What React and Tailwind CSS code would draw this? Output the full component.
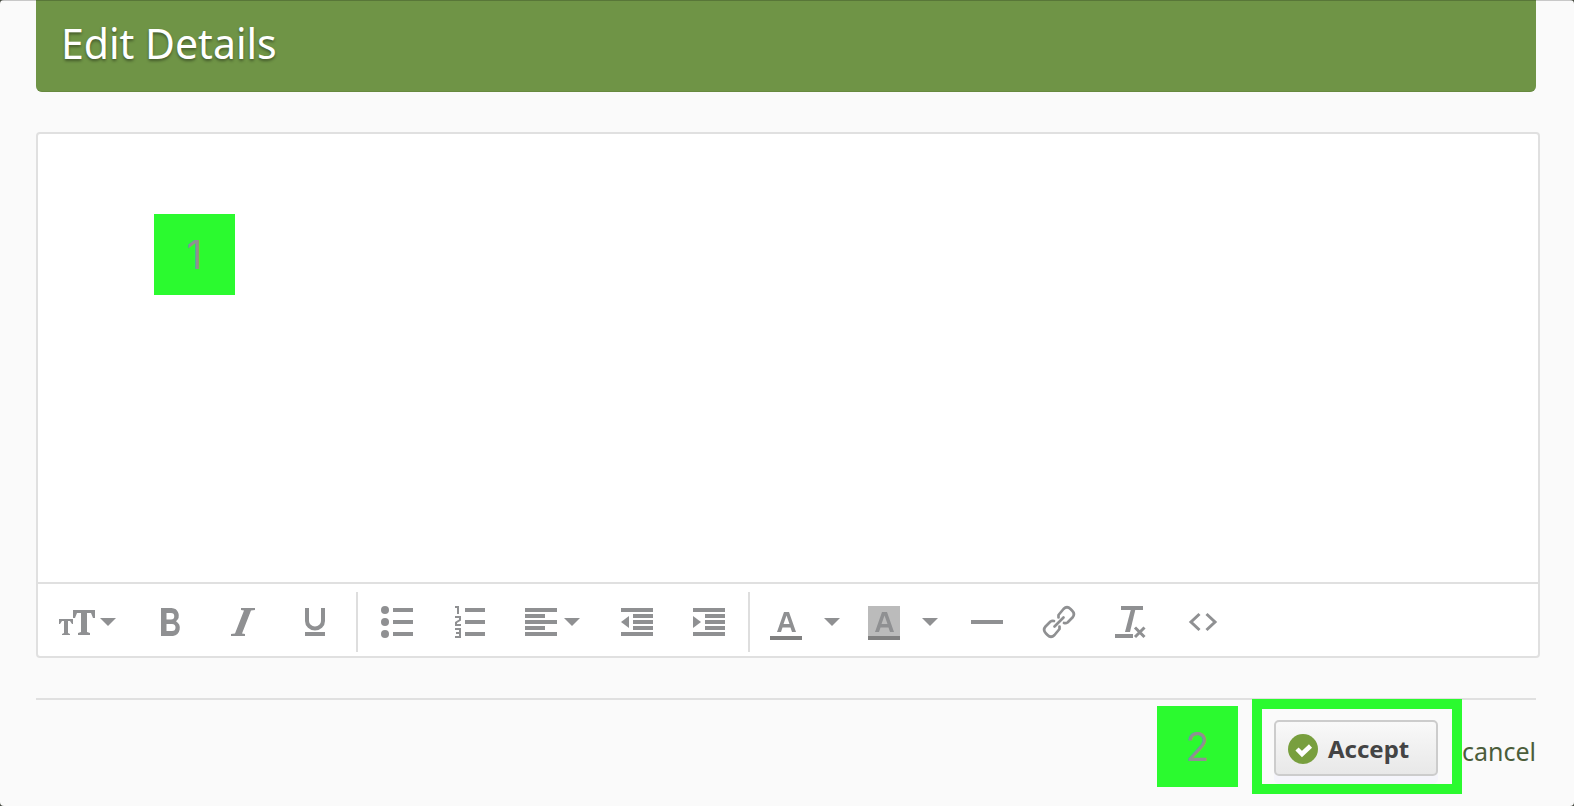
import React, { useState } from 'react';

function Icon({ width = 72, children }) {
  return (
    <svg width={width} height="72" viewBox={`0 0 ${width} 72`} fill="currentColor" aria-hidden="true">
      {children}
    </svg>
  );
}

function ToolButton({ label, width, children }) {
  return (
    <button type="button" aria-label={label} title={label} className="shrink-0 hover:bg-gray-50">
      <Icon width={width}>{children}</Icon>
    </button>
  );
}

function Separator({ className }) {
  return <div className={`mt-2 mb-1 w-[2px] shrink-0 bg-[#dedede] ${className}`} />;
}

function Badge({ className, children }) {
  return (
    <div className={`flex size-[81px] items-center justify-center bg-[#2bfa2f] font-['Inter','Liberation_Sans',sans-serif] text-[39px] leading-none text-[#8f9092] ${className}`}>
      {children}
    </div>
  );
}

// The letter A used by both colour pickers
const letterA = <path fillRule="evenodd" d="M27 48L34 28h5l7 20h-4l-1.500-4.500h-8L31 48zM33.500 40h6l-3-8.500z" />;

function Toolbar() {
  return (
    <div role="toolbar" aria-label="Formatting" className="flex h-[74px] overflow-hidden border-t-2 border-[#e0e0e0] text-[#8f9092]">
      <ToolButton label="Text style" width={96}>
        <path d="M35 26h22v8h-2l-2-5h-4v19l3 1v2H40v-2l3-1V29h-4l-2 5h-2z" />
        <path d="M21 35h14v5h-1l-2-3h-2v12l2 1v1h-8v-1l2-1V37h-2l-2 3h-1z" />
        <path d="M62 34h16l-8 8z" />
      </ToolButton>
      <ToolButton label="Bold">
        <path fillRule="evenodd" d="M27 24h10.500a7.500 7.500 0 0 1 4.500 13.300A8 8 0 0 1 39 52H27zM32.500 29v6.500H37a3.200 3.200 0 0 0 0-6.500zM32.500 40v7H38a3.500 3.500 0 0 0 0-7z" />
      </ToolButton>
      <ToolButton label="Italic">
        <path d="M35 24h14v2l-4 .5-9 23 3 .5v2H25v-2l4-.5 9-23-3-.5z" />
      </ToolButton>
      <ToolButton label="Underline">
        <path d="M29 24v13a8 7.500 0 0 0 16 0V24" fill="none" stroke="currentColor" strokeWidth="4" />
        <path d="M27 48h20v4H27z" />
      </ToolButton>
      <Separator className="ml-[6px] mr-[3px]" />
      <ToolButton label="Bulleted list">
        <circle cx="24" cy="26" r="4" />
        <circle cx="24" cy="38" r="4" />
        <circle cx="24" cy="50" r="4" />
        <path d="M32 24h20v4H32zM32 36h20v4H32zM32 48h20v4H32z" />
      </ToolButton>
      <ToolButton label="Numbered list">
        <path d="M22 23h3v7M22 33h5v3l-4 2.500V41h5M22 45h5v8h-5M23 49h4" fill="none" stroke="currentColor" strokeWidth="2" />
        <path d="M32 24h20v4H32zM32 36h20v4H32zM32 48h20v4H32z" />
      </ToolButton>
      <ToolButton label="Alignment" width={96}>
        <path d="M20 24h32v4H20zM20 30h20v4H20zM20 36h32v4H20zM20 42h20v4H20zM20 48h32v4H20z" />
        <path d="M59 34h16l-8 8z" />
      </ToolButton>
      <ToolButton label="Decrease indent">
        <path d="M20 24h32v4H20zM32 30h20v4H32zM32 36h20v4H32zM32 42h20v4H32zM20 48h32v4H20z" />
        <path d="M28 32v12l-8-6z" />
      </ToolButton>
      <ToolButton label="Increase indent">
        <path d="M20 24h32v4H20zM32 30h20v4H32zM32 36h20v4H32zM32 42h20v4H32zM20 48h32v4H20z" />
        <path d="M20 32v12l8-6z" />
      </ToolButton>
      <Separator className="ml-[3px]" />
      <ToolButton label="Text color">
        {letterA}
        <path d="M20 52h32v4H20z" fill="#808080" />
      </ToolButton>
      <ToolButton label="Choose text color" width={26}>
        <path d="M2 34h16l-8 8z" />
      </ToolButton>
      <ToolButton label="Highlight color">
        <path d="M20 22h32v30H20z" fill="#bbbbbb" />
        {letterA}
        <path d="M20 52h32v4H20z" fill="#808080" />
      </ToolButton>
      <ToolButton label="Choose highlight color" width={31}>
        <path d="M2 34h16l-8 8z" />
      </ToolButton>
      <ToolButton label="Horizontal line">
        <path d="M20 36h32v4H20z" />
      </ToolButton>
      <ToolButton label="Link">
        <g fill="none" stroke="currentColor" strokeWidth="2.700" strokeLinecap="round" strokeLinejoin="round">
          <path d="M35.500 33.500V31L40.500 25Q44 21.500 47.500 25L49 26.500Q52.500 30 49.500 33.500L44.500 38.500Q43 39.500 41 39" />
          <path d="M36.500 42.500V45L31.500 51Q28 54.500 24.500 51L23 49.500Q19.500 46 22.500 42.500L27.500 37.500Q29 36.500 31 37" />
          <path d="M31.500 42.500l9-9" />
        </g>
      </ToolButton>
      <ToolButton label="Clear formatting">
        <path d="M26 22h22v4H26zM20 50h18v4H20z" />
        <path d="M36 25h4.500L35 48h-5z" />
        <path d="M40 43.500l9.500 9.500M49.500 43.500L40 53" fill="none" stroke="currentColor" strokeWidth="3" />
      </ToolButton>
      <ToolButton label="Source code">
        <path d="M32.500 30L24 38l8.500 8M39.500 30L48 38l-8.500 8" fill="none" stroke="currentColor" strokeWidth="3" />
      </ToolButton>
    </div>
  );
}

function App() {
  const [details, setDetails] = useState("");

  return (
    <div className="bg-[#454a40]">
      <div className="relative flex min-h-screen flex-col overflow-hidden rounded-[4px] bg-[#fafafa] pr-[38px] pb-3 pl-9 font-['Noto_Sans','Open_Sans',sans-serif]">
        <div className="absolute inset-x-0 top-0 z-10 h-px bg-black/20" />

        <header className="h-[92px] shrink-0 rounded-b-[6px] border-b border-[#67893f] bg-[#6f9446] px-[25px] pt-[15px]">
          <h1 className="text-[41px] leading-[56px] text-white [text-shadow:0_2px_3px_rgba(0,0,0,0.4)]">Edit Details</h1>
        </header>

        <div className="relative mt-10 mr-[-4px] flex grow flex-col overflow-hidden rounded-[4px] border-2 border-[#e0e0e0] bg-white">
          <textarea
            aria-label="Details"
            className="min-h-40 w-full grow resize-none p-6 text-2xl text-[#444444] outline-none"
            value={details}
            onChange={e => setDetails(e.target.value)}
          />
          <Badge className="pointer-events-none absolute top-20 left-[116px]">1</Badge>
          <Toolbar />
        </div>

        <footer className="mt-10 flex shrink-0 items-start justify-end border-t-2 border-[#e0e0e0]">
          <Badge className="mt-[6px] mr-[14px]">2</Badge>
          <div className="-mt-px border-10 border-[#2bfa2f] pt-[11px] pr-[14px] pb-2 pl-3">
            <button type="button" className="flex h-14 w-[164px] items-center gap-[10px] rounded-[5px] border-2 border-[#cccccc] bg-linear-to-b from-[#f9f9f9] to-[#e8e8e8] pt-[2px] pl-3 text-2xl font-bold text-[#444444] shadow-[0_8px_0_#f5f5fb]">
              <svg width="30" height="30" viewBox="0 0 30 30" className="shrink-0" aria-hidden="true">
                <circle cx="15" cy="15" r="15" fill="#789f3e" />
                <path d="M9 15l5 5 8.500-8" fill="none" stroke="#ffffff" strokeWidth="4.500" />
              </svg>
              Accept
            </button>
          </div>
          <a href="#cancel" className="mt-[35px] text-[25px] leading-8 text-[#4b5d3a]">cancel</a>
        </footer>
      </div>
    </div>
  );
}

export default App;
